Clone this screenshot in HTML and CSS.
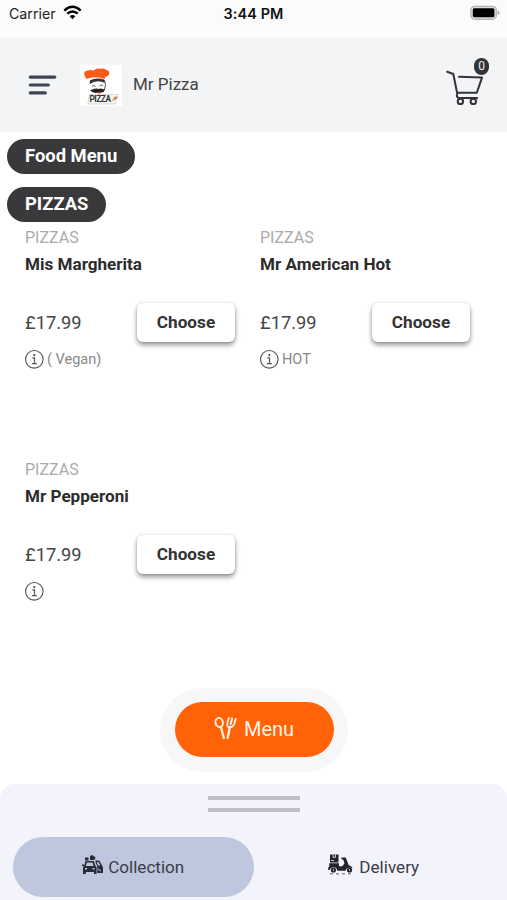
FILE: index.html
```html
<!DOCTYPE html>
<html lang="en">
<head>
<meta charset="utf-8">
<title>Mr Pizza</title>
<link rel="stylesheet" href="styles.css">
</head>
<body>
<svg class="defs" width="0" height="0" aria-hidden="true">
  <symbol id="info" viewBox="0 0 20 20">
    <circle cx="10.300" cy="10.300" r="8.8" fill="none" stroke="#555" stroke-width="1.1"/>
    <circle cx="10.300" cy="6" r="1.1" fill="#444"/>
    <path d="M8.300 8.900h2.200v5.400M7.900 14.600h5" fill="none" stroke="#555" stroke-width="1.2"/>
  </symbol>
</svg>
<div class="screen">
  <div class="status">
    <div class="carrier">Carrier
      <svg width="19" height="15" viewBox="0 0 19 15" fill="none" stroke="#000" stroke-width="2.4">
        <path d="M1.3 5.6Q9.5 -1.9 17.7 5.6"/><path d="M4.2 8.7Q9.5 4.2 14.8 8.7"/>
        <path d="M9.5 14.2 6.7 11.2Q9.5 8.9 12.3 11.2Z" fill="#000" stroke="none"/>
      </svg>
    </div>
    <div class="time">3:44 PM</div>
    <div class="battery">
      <svg width="31" height="15" viewBox="0 0 31 15">
        <rect x=".8" y="1.300" width="25.6" height="13" rx="4" fill="#ddd" stroke="#b5b5b5" stroke-width="1.3"/>
        <rect x="2.8" y="3.300" width="21.600" height="9" rx="1.500" fill="#000"/>
        <path d="M27.8 5.500v4.6q3.400-2.3 0-4.6" fill="#999"/>
      </svg>
    </div>
  </div>
  <header class="header">
    <svg class="burger" width="29" height="20" viewBox="0 0 29 20" stroke="#414458" stroke-width="3.2" stroke-linecap="round">
      <path d="M2.300 2.1h24.500M2.300 10h18M2.300 17.9h15"/>
    </svg>
    <svg class="logo" width="42" height="41" viewBox="0 0 42 41">
      <rect width="42" height="41" fill="#fff"/>
      <path d="M6.500 14 4.800 11Q2.500 6 8 5.400q3.500-.8 5.500.3Q16 2.600 21 3.700q3-.8 5 1 4.500 1 2.800 5-.800 2-3.600 2.400l-.5 1.800Q15 10.500 6.500 14Z" fill="#fb5a17"/>
      <path d="M9.800 15.500Q16 12.200 24 14.600l1 3.400Q17 14 9.800 19Z" fill="#333"/>
      <path d="M12 21.500q1.500-2.200 3.500 0M19.500 21q2-2.200 3.500 0M24.500 15q2 5 0 9.500" fill="none" stroke="#555"/>
      <path d="M10 25q3-.200 4.300-1.200 3-.8 3.900.2 2.500-1.200 4.300.1l2.700.5q-1.200 3.800-5.700 2.400-6.200 2.600-9.500-2Z" fill="#222"/>
      <path d="M17.500 27h4l-1.200 1.600h-2Z" fill="#e53920"/>
      <path d="M9 29.500h29l-3 9.500H8Z" fill="#f5f5f1" stroke="#ccc" stroke-width=".7"/>
      <text x="9.500" y="37.300" font-family="Roboto" font-size="8.300" font-weight="700" fill="#333" textLength="21.500">PIZZA</text>
      <path d="m33 34 2-2.500 3 .5-3 3Z" fill="#f26a3a"/><circle cx="33" cy="35" r="1" fill="#9cc77e"/>
    </svg>
    <div class="brand">Mr Pizza</div>
    <div class="cart">
      <svg width="38" height="38" viewBox="0 0 38 38" fill="none" stroke="#333438" stroke-width="2" stroke-linecap="round" stroke-linejoin="round">
        <path d="M1.200 2.800 7.300 5 11.200 24.200M13 7.700 36 8.600 30.800 23.800H11.500Q9.500 29 13.500 29h17.700"/>
        <circle cx="14.400" cy="32.400" r="2.700"/><circle cx="27.300" cy="32.400" r="2.700"/>
      </svg>
      <span class="badge">0</span>
    </div>
  </header>
  <main class="main">
    <div class="pill">Food Menu</div>
    <div class="pill">PIZZAS</div>
    <div class="grid">
      <article class="card">
        <div class="cat">PIZZAS</div>
        <div class="name">Mis Margherita</div>
        <div class="buy"><span class="price">£17.99</span><button class="choose">Choose</button></div>
        <div class="note"><svg width="20" height="20"><use href="#info"/></svg><span>( Vegan)</span></div>
      </article>
      <article class="card">
        <div class="cat">PIZZAS</div>
        <div class="name">Mr American Hot</div>
        <div class="buy"><span class="price">£17.99</span><button class="choose">Choose</button></div>
        <div class="note"><svg width="20" height="20"><use href="#info"/></svg><span>HOT</span></div>
      </article>
      <article class="card">
        <div class="cat">PIZZAS</div>
        <div class="name">Mr Pepperoni</div>
        <div class="buy"><span class="price">£17.99</span><button class="choose">Choose</button></div>
        <div class="note"><svg width="20" height="20"><use href="#info"/></svg></div>
      </article>
    </div>
  </main>
  <div class="menu-ring">
    <button class="menu">
      <svg width="23" height="24" viewBox="0 0 23 24" fill="none" stroke="#fff3e6" stroke-width="1.900" stroke-linecap="round" stroke-linejoin="round">
        <ellipse cx="5.200" cy="6.500" rx="3.700" ry="4.600" transform="rotate(-15 5.200 6.500)"/>
        <path d="M7 11.200 9.800 22" stroke-width="2.300"/>
        <path d="M14.800 2 13.300 7.500q-.5 3.500 2.300 3.800 3.500 0 4.500-3L21.700 3M18.200 2.300l-1.600 6"/>
        <path d="M15.800 11.500 13.600 22" stroke-width="2.300"/>
      </svg>
      <span>Menu</span>
    </button>
  </div>
  <section class="sheet">
    <div class="handle"><i></i><i></i></div>
    <div class="tabs">
      <div class="tab active">
        <svg width="21" height="20" viewBox="0 0 21 20" fill="#292b38">
          <path d="M3 2.500h3.500v3H3zM8 .8l3-.8v5H8zM11 1l2.500 1-1 3H11z"/>
          <path fill-rule="evenodd" d="M3.500 6h8.300l1.800 5 1 1.200V19H12v-2H3.800v2H1v-7l1-1ZM4.800 7.600 3.800 11h7.700l-1-3.400ZM3 13v1.500h2V13Zm7.500 0v1.500h2V13Z"/>
          <path d="M0 9.500h2v1.500H0zM13.200 5.500h4l3 5 .8 2V18h-5.700v-6.500l-1.500-3.700Z"/>
          <path d="m15 7 1.700.1 1.500 3.400H16Z" fill="#bfc7de"/><path d="m16 14 3 2" stroke="#bfc7de"/>
        </svg>
        <span>Collection</span>
      </div>
      <div class="tab">
        <svg width="26" height="21" viewBox="0 0 26 21">
          <path d="M2 .5h8.500v8H2zM1.200 9.300H11v3h3.200l2.300-2.800-1.200-3.700-1.800-.6V3.500h4.300l2.800 7.500q3 .6 4.100 3.500l-3-1q-3.300 0-4.200 3.200H9.300q-.6-3.400-3.900-3.400-3 0-4 3L0 15.800q0-2.500 1.400-3.700Z" fill="#22232b"/>
          <path d="M5 .5v2.800h2.500V.5M3 6.500h3" fill="none" stroke="#f2f3fb" stroke-width=".8"/>
          <circle cx="5.400" cy="16" r="2.600" fill="#22232b"/><circle cx="21.500" cy="16" r="2.600" fill="#22232b"/>
          <circle cx="5.400" cy="16" r=".7" fill="#f2f3fb"/><circle cx="21.500" cy="16" r=".7" fill="#f2f3fb"/>
          <path d="M2 19.800h3M8 19.800h3M14 19.800h3M20 19.800h3" stroke="#555" stroke-width=".9"/>
        </svg>
        <span>Delivery</span>
      </div>
    </div>
  </section>
</div>
</body>
</html>
```
FILE: styles.css
```css
* { box-sizing: border-box; }
body { margin: 0; font-family: Roboto, "Liberation Sans", sans-serif; color: #333; background: #fff; }
button { font: inherit; border: 0; padding: 0; }
svg { display: block; flex: none; }
.defs { position: absolute; }
.screen { height: 900px; display: flex; flex-direction: column; overflow: hidden; }

.status { height: 38px; flex: none; background: #fbfbfb; display: grid; grid-template-columns: 1fr auto 1fr; align-items: start; padding: 5px 6px 0 9px; font-family: Inter, sans-serif; color: #111; }
.carrier { display: flex; gap: 7px; font-size: 14.2px; line-height: 18px; color: #222; }
.time { margin-right: 3px; font-size: 14.400px; line-height: 18px; font-weight: 600; letter-spacing: .1px; }
.battery { display: flex; justify-content: flex-end; }

.header { height: 94px; flex: none; background: #f2f4f5; display: flex; align-items: center; padding: 0 18px 0 28px; }
.logo { margin-left: 23px; }
.brand { margin: -2px 0 0 11px; font-size: 17px; line-height: 20px; color: #444; flex: 1; }
.cart { position: relative; width: 43px; height: 46px; padding-top: 7px; }
.badge { position: absolute; top: -4px; right: 0; width: 15px; height: 17px; border-radius: 8px; background: #333438; color: #eee; font-size: 12px; line-height: 17px; text-align: center; }

.main { flex: 1; min-height: 0; display: flex; flex-direction: column; align-items: flex-start; padding-top: 7px; }
.pill { flex: none; height: 35px; line-height: 34px; margin: 0 0 13px 7px; padding: 0 18px; border-radius: 18px; background: #39393b; color: #fff; font-size: 18.400px; font-weight: 700; }
.pill + .pill { margin-bottom: 6px; }
.grid { flex: none; display: grid; grid-template-columns: 210px 210px; column-gap: 25px; grid-auto-rows: 232px; padding-left: 25px; }
.cat { font-size: 16px; line-height: 20px; color: #aaa; }
.name { margin-top: 6px; font-size: 17.100px; line-height: 20px; font-weight: 700; color: #2c2c2c; }
.buy { margin-top: 29px; height: 39px; display: flex; align-items: center; justify-content: space-between; }
.price { margin-top: -1px; font-size: 18.300px; color: #444; }
.choose { width: 98px; height: 39px; border-radius: 6px; background: #fff; color: #333; padding-bottom: 2px; font-size: 17.200px; font-weight: 700; box-shadow: 0 3px 5px rgba(0,0,0,.42), 0 0 3px rgba(0,0,0,.12); }
.note { margin: 7px 0 0 -1px; height: 20px; display: flex; align-items: center; gap: 3px; font-size: 14.500px; color: #888; }

.menu-ring { flex: none; align-self: center; width: 188px; height: 84px; margin: 0 0 12px 1px; border-radius: 42px; background: #f7f7f7; padding: 14px 14.500px; }
.menu { width: 159px; height: 55px; border-radius: 28px; background: #ff6207; color: #fff3e6; display: flex; align-items: center; justify-content: center; gap: 7px; font-size: 20px; }
.menu svg { margin-top: -4px; }
.menu span { margin-top: -1px; }

.sheet { height: 116px; flex: none; background: #f2f3fb; border-radius: 15px 15px 0 0; padding: 12px 13px 3px; display: flex; flex-direction: column; justify-content: space-between; }
.handle { align-self: center; width: 92px; display: flex; flex-direction: column; gap: 8px; }
.handle i { height: 4px; background: #bfc0c5; }
.tabs { display: flex; }
.tab { width: 241px; height: 60px; border-radius: 30px; display: flex; align-items: center; justify-content: center; gap: 5px; font-size: 17.100px; color: #3b3d45; }
.tab svg { margin-top: -5px; }
.tab span { margin-top: -1px; }
.active { background: #bfc7de; }
```
